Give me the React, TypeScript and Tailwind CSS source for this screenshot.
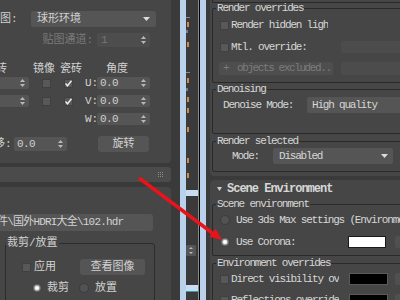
import React from "react";

const F = "font-['Liberation_Mono','Noto_Sans_CJK_SC',monospace]";

function Tri() {
  return (
    <svg width="7" height="4" viewBox="0 0 7 4">
      <polygon points="0,0 7,0 3.5,4" fill="#dcdcdc" />
    </svg>
  );
}

function Arrows() {
  return (
    <svg width="5" height="8" viewBox="0 0 5 8">
      <polygon points="0,3 2.5,0 5,3" fill="#b8b8b8" />
      <polygon points="0,5 2.5,8 5,5" fill="#b8b8b8" />
    </svg>
  );
}

function Check({ on = false }: { on?: boolean }) {
  return (
    <div className="w-[9px] h-[9px] shrink-0 bg-[#585858] border border-[#404040] flex items-center justify-center">
      {on && (
        <svg width="7" height="7" viewBox="0 0 7 7">
          <polyline points="0.5,3.5 2.5,5.8 6.5,0.8" fill="none" stroke="#f0f0f0" strokeWidth="1.4" />
        </svg>
      )}
    </div>
  );
}

function Radio({ on = false }: { on?: boolean }) {
  return (
    <div className="w-[10px] h-[10px] shrink-0 rounded-full bg-[#525252] border border-[#3c3c3c] flex items-center justify-center">
      {on && <div className="w-[4px] h-[4px] rounded-full bg-white shadow-[0_0_2px_1px_rgba(255,255,255,0.7)]" />}
    </div>
  );
}

function Spin({ v, cls }: { v: string; cls: string }) {
  return (
    <div className={`${cls} shrink-0 bg-[#555555] rounded-[2px] flex items-center justify-between pl-[3px] pr-[4px]`}>
      <span className="text-[11px] tracking-[-0.6px] leading-none text-[#d0d0d0]">{v}</span>
      <Arrows />
    </div>
  );
}

function Strip() {
  const orange = [22, 42, 78, 97, 108, 127, 158, 173];
  return (
    <svg width="12" height="300" viewBox="0 0 12 300" className="shrink-0 block">
      <rect x="0" y="0" width="12" height="300" fill="#3a3a3a" />
      {orange.map((y) => (
        <rect key={y} x="1" y={y} width="2" height="5" fill="#c98a4a" />
      ))}
      <rect x="0" y="17" width="4" height="1" fill="#8a8a8a" />
      <rect x="0" y="72" width="4" height="1" fill="#8a8a8a" />
      <rect x="0" y="30" width="2" height="3" fill="#6c7f96" />
      <rect x="0" y="88" width="2" height="3" fill="#6c7f96" />
      <rect x="0" y="190" width="12" height="6" fill="#c9dcf0" />
      <rect x="0" y="245" width="10" height="11" rx="1" fill="#555555" />
      <polygon points="3,249 5,247 7,249" fill="#bbbbbb" />
      <polygon points="3,252 5,254 7,252" fill="#bbbbbb" />
      <rect x="0" y="285" width="12" height="6" fill="#c9dcf0" />
      <rect x="0" y="291" width="12" height="1" fill="#2a9fae" />
    </svg>
  );
}

function LeftPanel() {
  return (
    <div className={`w-[171px] shrink-0 flex flex-col overflow-hidden text-[#d2d2d2] text-[11px] ${F}`}>
      <div className="h-[163px] shrink-0 bg-[#464646] rounded-br-[4px] flex flex-col">
        <div className="mt-[11px] h-[16px] flex items-center">
          <span className="w-[31px] leading-none">图:</span>
          <div className="w-[125px] h-[16px] bg-[#555555] rounded-[2px] flex items-center justify-between pl-[6px] pr-[6px]">
            <span className="leading-none">球形环境</span>
            <Tri />
          </div>
        </div>
        <div className="mt-[6px] h-[14px] flex items-center">
          <span className="w-[93px] text-right leading-none text-[#7a7a7a]">贴图通道:</span>
          <div className="ml-[4px] w-[53px] h-[14px] bg-[#4d4d4d] rounded-[2px] flex items-center justify-between pl-[4px] pr-[4px]">
            <span className="leading-none text-[#777777]">1</span>
            <Arrows />
          </div>
        </div>
        <div className="mt-[16px] h-[13px] flex items-center leading-none">
          <span className="-ml-[4px] w-[37px]">砖</span>
          <span className="w-[27px]">镜像</span>
          <span className="w-[46px]">瓷砖</span>
          <span>角度</span>
        </div>
        {["U:", "V:"].map((l, i) => (
          <div key={l} className={`${i === 0 ? "mt-[1px]" : "mt-[6px]"} h-[12px] flex items-center`}>
            <Spin v="0.0" cls="-ml-[24px] w-[53px] h-[12px]" />
            <div className="ml-[13px]"><Check /></div>
            <div className="ml-[13px]"><Check on /></div>
            <span className="ml-[12px] w-[12px] leading-none">{l}</span>
            <Spin v="0.0" cls="w-[53px] h-[12px]" />
          </div>
        ))}
        <div className="mt-[6px] h-[12px] flex items-center pl-[85px]">
          <span className="w-[12px] leading-none">W:</span>
          <Spin v="0.0" cls="w-[53px] h-[12px]" />
        </div>
        <div className="mt-[11px] h-[16px] flex items-center">
          <span className="-ml-[6px] w-[20px] leading-none">移:</span>
          <Spin v="0.0" cls="w-[53px] h-[14px]" />
          <div className="ml-[31px] w-[51px] h-[16px] bg-[#555555] rounded-[3px] flex items-center justify-center leading-none">旋转</div>
        </div>
      </div>
      <div className="h-[4px] shrink-0" />
      <div className="h-[15px] shrink-0 bg-[#4b4b4b] rounded-r-[3px] flex items-center justify-end pr-[7px]">
        <svg width="6" height="5" viewBox="0 0 6 5">
          {[0, 2, 4].map((x) => [0, 2, 4].map((y) => <rect key={`${x}-${y}`} x={x} y={y} width="1" height="1" fill="#8c8c8c" />))}
        </svg>
      </div>
      <div className="h-[5px] shrink-0" />
      <div className="flex-1 bg-[#464646] rounded-tr-[4px] flex flex-col">
        <div className="mt-[27px] -ml-[10px] w-[163px] h-[17px] shrink-0 bg-[#555555] rounded-[3px] flex items-center pl-[7px] overflow-hidden whitespace-nowrap">
          <span className="leading-none tracking-[-0.8px]">件\国外HDRI大全\102.hdr</span>
        </div>
        <fieldset className="mt-[6px] ml-[5px] w-[150px] border border-[#2c2c2c] rounded-[3px]">
          <legend className="px-[1px] leading-[12px]">裁剪/放置</legend>
          <div className="pt-[10px] pl-[16px] h-[26px] flex items-center">
            <Check />
            <span className="ml-[3px] w-[46px] leading-none">应用</span>
            <div className="w-[65px] h-[16px] bg-[#555555] rounded-[3px] flex items-center justify-center leading-none">查看图像</div>
          </div>
          <div className="mt-[7px] h-[12px] pl-[26px] flex items-center leading-none">
            <Radio on />
            <span className="ml-[5px] w-[32px]">裁剪</span>
            <Radio />
            <span className="ml-[6px]">放置</span>
          </div>
          <div className="h-[20px]" />
        </fieldset>
      </div>
    </div>
  );
}

function Legend({ children }: { children: React.ReactNode }) {
  return <legend className="ml-[3px] px-[1px] leading-[10px]">{children}</legend>;
}

function RightPanel() {
  const fs = "ml-[2px] border border-[#2a2a2a] rounded-[2px]";
  return (
    <div className={`w-[240px] shrink-0 flex flex-col text-[#d6d6d6] text-[11px] tracking-[-1.2px] ${F}`}>
      <div className="h-[176px] shrink-0 bg-[#464646] rounded-b-[4px] flex flex-col">
        <div className="ml-[2px] h-[3px] border-l border-b border-[#2a2a2a]" />
        <fieldset className={fs}>
          <Legend>Render overrides</Legend>
          <div className="pl-[7px] pt-[5px] pb-[7px] flex flex-col">
            <div className="h-[14px] flex items-center">
              <Check />
              <span className="ml-[2px] w-[97px] overflow-hidden whitespace-nowrap leading-none">Render hidden lights</span>
            </div>
            <div className="mt-[8px] h-[14px] flex items-center">
              <Check />
              <span className="ml-[2px] w-[110px] whitespace-nowrap leading-none">Mtl. override:</span>
              <div className="w-[80px] h-[12px] bg-[#4c4c4c] rounded-[2px]" />
            </div>
            <div className="mt-[8px] h-[13px] flex items-center">
              <div className="-ml-[1px] w-[114px] h-[13px] bg-[#4e4e4e] rounded-[2px] flex items-center pl-[4px] text-[#7c7c7c] whitespace-nowrap leading-none">
                <span className="w-[14px]">+</span>
                <span className="tracking-[-1.4px]">objects excluded..</span>
              </div>
              <div className="ml-[8px] w-[80px] h-[13px] bg-[#4c4c4c] rounded-[2px]" />
            </div>
          </div>
        </fieldset>
        <fieldset className={`mt-[1px] ${fs}`}>
          <Legend>Denoising</Legend>
          <div className="pl-[10px] pt-[3px] pb-[20px]">
            <div className="h-[16px] flex items-center">
              <span className="w-[84px] whitespace-nowrap leading-none">Denoise Mode:</span>
              <div className="w-[120px] h-[16px] bg-[#555555] rounded-[2px] flex items-center pl-[5px] whitespace-nowrap leading-none">High quality</div>
            </div>
          </div>
        </fieldset>
        <fieldset className={`mt-[2px] ${fs}`}>
          <Legend>Render selected</Legend>
          <div className="pl-[19px] pt-[2px] pb-[7px]">
            <div className="h-[16px] flex items-center">
              <span className="w-[41px] leading-none">Mode:</span>
              <div className="w-[120px] h-[16px] bg-[#555555] rounded-[2px] flex items-center justify-between pl-[6px] pr-[5px] leading-none">
                <span>Disabled</span>
                <Tri />
              </div>
            </div>
          </div>
        </fieldset>
      </div>
      <div className="h-[4px] shrink-0" />
      <div className="flex-1 bg-[#464646] rounded-t-[4px] flex flex-col">
        <div className="h-[18px] flex items-center pl-[7px]">
          <svg width="5" height="4" viewBox="0 0 5 4"><polygon points="0,0 5,0 2.5,4" fill="#cfcfcf" /></svg>
          <span className="ml-[5px] text-[12px] font-bold tracking-[-1px] leading-none">Scene Environment</span>
        </div>
        <fieldset className={`mt-[1px] ${fs}`}>
          <Legend>Scene environment</Legend>
          <div className="pl-[7px] pt-[5px] pb-[7px] flex flex-col">
            <div className="h-[12px] flex items-center">
              <Radio />
              <span className="ml-[6px] whitespace-nowrap leading-none">Use 3ds Max settings (Environment)</span>
            </div>
            <div className="mt-[10px] h-[12px] flex items-center">
              <Radio on />
              <span className="ml-[6px] w-[112px] whitespace-nowrap leading-none">Use Corona:</span>
              <div className="w-[38px] h-[12px] bg-white border border-[#1a1a1a]" />
              <div className="ml-[9px] w-[20px] h-[12px] bg-[#505050] rounded-[2px]" />
            </div>
          </div>
        </fieldset>
        <fieldset className={`mt-[2px] ${fs}`}>
          <Legend>Environment overrides</Legend>
          <div className="pl-[7px] pt-[5px] pb-[7px] flex flex-col">
            <div className="h-[12px] flex items-center">
              <Check />
              <span className="ml-[2px] w-[108px] overflow-hidden whitespace-nowrap leading-none">Direct visibility override</span>
              <div className="ml-[10px] w-[39px] h-[12px] bg-black border border-[#5a5a5a]" />
              <div className="ml-[7px] w-[20px] h-[12px] bg-[#505050] rounded-[2px]" />
            </div>
            <div className="mt-[9px] h-[12px] flex items-center">
              <Check />
              <span className="ml-[2px] w-[108px] overflow-hidden whitespace-nowrap leading-none">Reflections override</span>
              <div className="ml-[10px] w-[39px] h-[12px] bg-black border border-[#5a5a5a]" />
              <div className="ml-[7px] w-[20px] h-[12px] bg-[#505050] rounded-[2px]" />
            </div>
          </div>
        </fieldset>
      </div>
    </div>
  );
}

export default function App() {
  return (
    <div className="relative w-[400px] h-[300px] overflow-hidden flex bg-[#3a3a3a]">
      <LeftPanel />
      <div className="w-[9px] shrink-0 bg-[#3a3a3a]" />
      <div className="w-[6px] shrink-0 bg-[#b9d1ea]" />
      <Strip />
      <div className="w-[1px] shrink-0 bg-[#8a8a8a]" />
      <div className="w-[1px] shrink-0 bg-black" />
      <div className="w-[6px] shrink-0 bg-[#b9d1ea]" />
      <div className="w-[4px] shrink-0 bg-[#3a3a3a]" />
      <RightPanel />
      <svg className="absolute left-0 top-0 pointer-events-none" width="400" height="300" viewBox="0 0 400 300">
        <line x1="139" y1="178" x2="213" y2="233.5" stroke="#e8141b" strokeWidth="3.5" />
        <polygon points="222,240 209.2,236.8 215.6,228.6" fill="#e8141b" />
      </svg>
    </div>
  );
}
